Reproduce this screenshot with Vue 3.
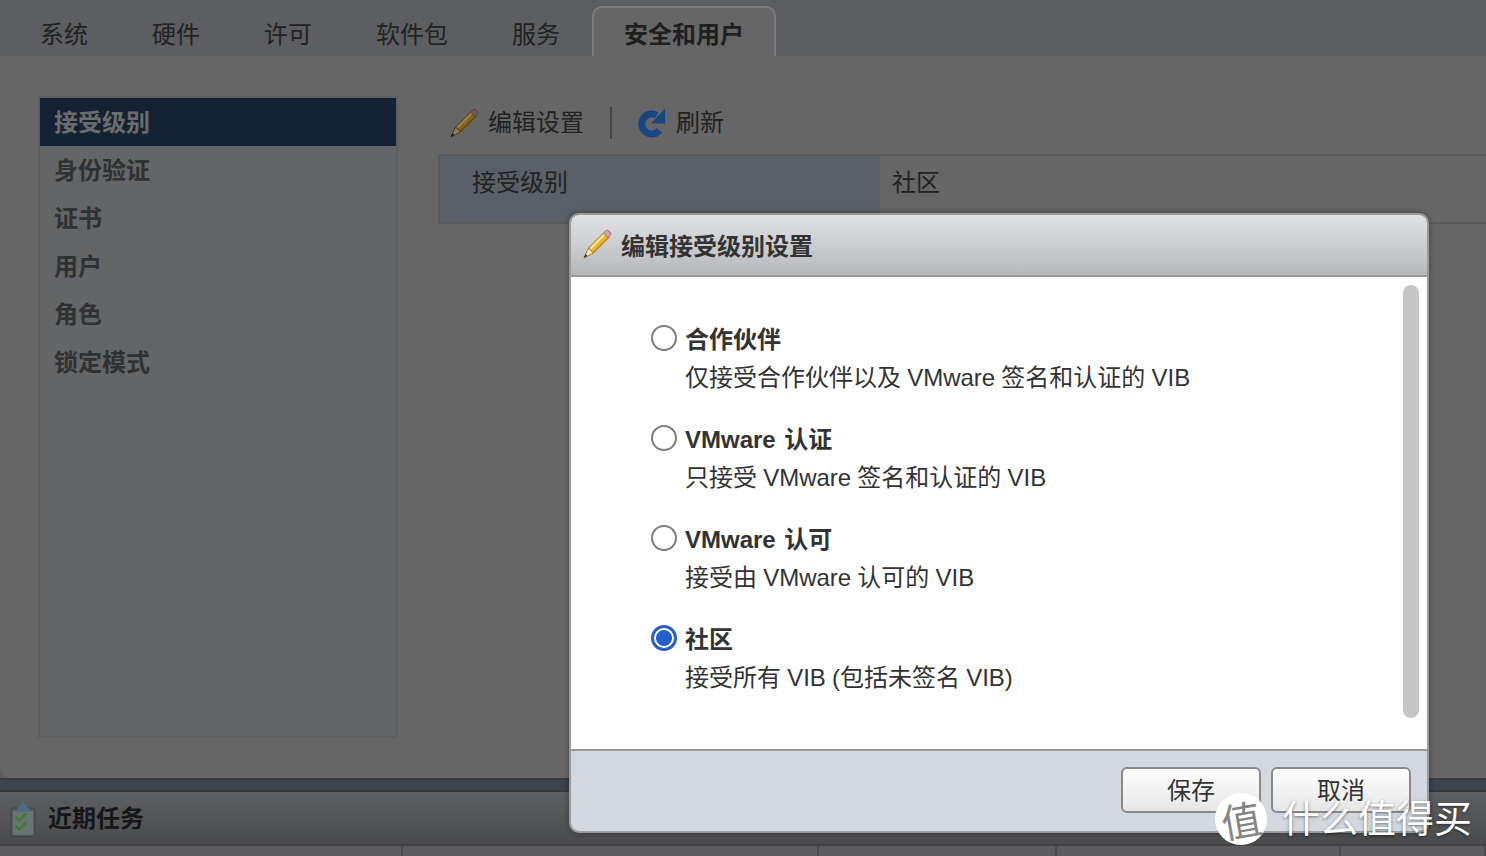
<script setup>
const tabs = [
  { label: '系统' },
  { label: '硬件' },
  { label: '许可' },
  { label: '软件包' },
  { label: '服务' },
  { label: '安全和用户', active: true },
]

const sideItems = ['接受级别', '身份验证', '证书', '用户', '角色', '锁定模式']

const options = [
  { title: '合作伙伴', desc: '仅接受合作伙伴以及 VMware 签名和认证的 VIB' },
  { title: 'VMware 认证', desc: '只接受 VMware 签名和认证的 VIB' },
  { title: 'VMware 认可', desc: '接受由 VMware 认可的 VIB' },
  { title: '社区', desc: '接受所有 VIB (包括未签名 VIB)', checked: true },
]

const taskCols = [403, 416, 238, 284, 145]
</script>

<template>
  <div class="page">
    <div class="tabs">
      <div v-for="tab in tabs" :key="tab.label" class="tab" :class="{ 'tab--active': tab.active }">{{ tab.label }}</div>
    </div>

    <div class="content">
      <div class="side">
        <div v-for="(item, i) in sideItems" :key="item" class="side__item" :class="{ 'side__item--active': i === 0 }">{{ item }}</div>
      </div>
      <div class="main">
        <div class="toolbar">
          <svg class="icon-pencil icon-pencil--dim" viewBox="0 0 30 30">
            <path d="M6.500 19 21.500 4l5 5-15 15z" fill="#e8b030" stroke="#8a6414" />
            <path d="M7.500 19 22 4.500l1.500 1.500L9 20.500z" fill="#f6e08a" />
            <path d="M10.500 23 25 8.500l1.500.5-15 15z" fill="#b9851e" />
            <path d="M21.500 4l2-2a2.500 2.500 0 0 1 3.500 0l1 1a2.500 2.500 0 0 1 0 3.500l-1.500 2.500z" fill="#c99a9c" stroke="#8d6a6c" />
            <path d="M6.500 19l5 5-9.500 5z" fill="#ecdcb8" stroke="#8a6414" />
            <path d="M3.500 25l2 2-4 2z" fill="#333" />
          </svg>
          <span class="toolbar__text">编辑设置</span>
          <span class="toolbar__sep"></span>
          <svg class="icon-refresh" viewBox="0 0 30 30">
            <path d="M19.700 7.300A10 10 0 1 0 22.400 22.400" fill="none" stroke="#1a4585" stroke-width="7" />
            <path d="M14 15.500H28V.5z" fill="#1a4585" />
          </svg>
          <span class="toolbar__text">刷新</span>
        </div>
        <div class="prop">
          <div class="prop__key">接受级别</div>
          <div class="prop__val">社区</div>
        </div>
      </div>
    </div>

    <div class="splitter"></div>

    <div class="tasks">
      <svg class="icon-tasks" viewBox="0 0 26 36">
        <rect x="1" y="7" width="24" height="28.500" rx="2" fill="#555c60" stroke="#3f4346" />
        <rect x="3" y="10" width="20" height="23.500" fill="#6b7377" />
        <path d="M7 8l6-7 6 7v3H7z" fill="#4f6c86" />
        <path d="M5.500 16l3.500 3.500 7-7M5.500 25l3.500 3.500 7-7" fill="none" stroke="#3f7d2e" stroke-width="3" />
      </svg>
      <span class="tasks__title">近期任务</span>
    </div>
    <div class="task-cols">
      <div v-for="(w, i) in taskCols" :key="i" class="task-cols__cell" :style="{ width: w + 'px' }"></div>
    </div>

    <div class="modal">
      <div class="modal__head">
        <svg class="icon-pencil" viewBox="0 0 30 30">
          <path d="M6.500 19 21.500 4l5 5-15 15z" fill="#eeb735" stroke="#a87c1c" />
          <path d="M7.500 19 22 4.500l1.500 1.500L9 20.500z" fill="#fbe996" />
          <path d="M10.500 23 25 8.500l1.500.5-15 15z" fill="#c8922a" />
          <path d="M21.500 4l2-2a2.500 2.500 0 0 1 3.500 0l1 1a2.500 2.500 0 0 1 0 3.500l-1.500 2.500z" fill="#d8a4a8" stroke="#a07478" />
          <path d="M6.500 19l5 5-9.500 5z" fill="#f3e3bd" stroke="#a87c1c" />
          <path d="M3.500 25l2 2-4 2z" fill="#333" />
        </svg>
        <span class="modal__title">编辑接受级别设置</span>
      </div>
      <div class="modal__body">
        <div class="options">
          <div v-for="opt in options" :key="opt.title" class="option">
            <span class="radio" :class="{ 'radio--on': opt.checked }"></span>
            <div class="option__text">
              <div class="option__title">{{ opt.title }}</div>
              <div class="option__desc">{{ opt.desc }}</div>
            </div>
          </div>
        </div>
        <div class="scroll"></div>
      </div>
      <div class="modal__foot">
        <button class="btn">保存</button>
        <button class="btn">取消</button>
      </div>
    </div>

    <div class="mark">
      <span class="mark__badge"><span class="mark__glyph">值</span></span>
      <span class="mark__text">什么值得买</span>
    </div>
  </div>
</template>

<style>
html, body {
  margin: 0;
  background: #5c5e61;
}
</style>

<style scoped>
.page {
  position: relative;
  width: 1486px;
  height: 856px;
  overflow: hidden;
  display: flex;
  flex-direction: column;
  background: #5c5e61;
  color: #2b2b2b;
  font-family: "Liberation Sans", "Noto Sans CJK SC", sans-serif;
  font-size: 24px;
}

.tabs {
  height: 56px;
  flex: none;
  display: flex;
  align-items: flex-end;
  padding-left: 8px;
  box-sizing: border-box;
  background: #5c5e61;
}

.tab {
  height: 50px;
  box-sizing: border-box;
  padding: 0 32px;
  line-height: 58px;
  color: #222;
}

.tab--active {
  padding: 0 30px;
  border: 2px solid #7a7c7e;
  border-bottom: 0;
  border-radius: 10px 10px 0 0;
  background: #666;
  font-weight: 700;
  line-height: 54px;
  color: #1f1f1f;
}

.content {
  height: 722px;
  flex: none;
  box-sizing: border-box;
  display: flex;
  padding: 40px 0 40px 38px;
  background: #666;
  border-radius: 0 0 0 10px;
}

.side {
  width: 360px;
  flex: none;
  box-sizing: border-box;
  border: 2px solid #5c5e60;
  background: #636567;
}

.side__item {
  height: 48px;
  padding-left: 14px;
  line-height: 50px;
  font-weight: 700;
  color: #303132;
}

.side__item--active {
  background: #152233;
  color: #6c6c6c;
}

.main {
  flex: 1;
  margin-left: 40px;
}

.toolbar {
  height: 58px;
  box-sizing: border-box;
  display: flex;
  align-items: center;
  padding: 0 0 4px 11px;
  color: #222;
}

.toolbar__text {
  margin-bottom: 6px;
}

.toolbar__sep {
  width: 2px;
  height: 32px;
  margin: 0 25px 0 26px;
  background: #454648;
}

.icon-pencil {
  width: 30px;
  height: 30px;
  margin-right: 9px;
  flex: none;
}

.icon-pencil--dim {
  filter: brightness(0.58);
}

.icon-refresh {
  width: 30px;
  height: 30px;
  margin-right: 9px;
  flex: none;
}

.prop {
  height: 70px;
  box-sizing: border-box;
  display: flex;
  border: 2px solid #585a5c;
  border-right: 0;
}

.prop__key {
  width: 440px;
  flex: none;
  box-sizing: border-box;
  padding: 7px 0 0 32px;
  background: #5a6065;
  color: #222;
}

.prop__val {
  padding: 7px 0 0 12px;
  color: #222;
}

.splitter {
  height: 14px;
  flex: none;
  box-sizing: border-box;
  background: #3e444c;
  border-top: 2px solid #37393c;
  border-bottom: 2px solid #37393c;
}

.tasks {
  height: 54px;
  flex: none;
  box-sizing: border-box;
  display: flex;
  align-items: center;
  padding: 0 0 4px 10px;
  background: linear-gradient(#5d5f62, #4a4b4d);
  border-radius: 10px 0 0 0;
  border-bottom: 2px solid #424345;
}

.icon-tasks {
  width: 26px;
  height: 36px;
  margin: 6px 12px 0 0;
  flex: none;
}

.tasks__title {
  font-weight: 700;
  color: #161616;
}

.task-cols {
  flex: 1;
  display: flex;
  background: #5d5d5f;
}

.task-cols__cell {
  flex: none;
  box-sizing: border-box;
  border-right: 2px solid #4c4c4e;
}

.modal {
  position: absolute;
  left: 569px;
  top: 213px;
  width: 860px;
  height: 620px;
  box-sizing: border-box;
  display: flex;
  flex-direction: column;
  border: 2px solid #9a9a9a;
  border-radius: 10px;
  overflow: hidden;
  box-shadow: 0 0 6px rgba(0, 0, 0, 0.35);
}

.modal__head {
  height: 62px;
  flex: none;
  box-sizing: border-box;
  display: flex;
  align-items: center;
  padding: 0 0 2px 11px;
  background: linear-gradient(#e1e2e6, #b6b8bb);
  border-bottom: 2px solid #9a9a9a;
}

.modal__title {
  font-weight: 700;
  color: #333;
}

.modal__body {
  height: 472px;
  flex: none;
  box-sizing: border-box;
  display: flex;
  justify-content: space-between;
  padding: 8px 8px 31px 80px;
  background: #fff;
}

.options {
  padding-top: 36px;
}

.option {
  height: 100px;
  display: flex;
  gap: 8px;
}

.radio {
  width: 26px;
  height: 26px;
  flex: none;
  margin-top: 4px;
  box-sizing: border-box;
  border: 2px solid #7d7d7d;
  border-radius: 50%;
  background: #fff;
}

.radio--on {
  border: 3px solid #2a62c8;
  background: radial-gradient(circle, #2460c8 0 7.500px, #fff 8.500px);
}

.option__title {
  height: 38px;
  line-height: 38px;
  font-weight: 700;
  word-spacing: 2px;
  color: #333;
}

.option__desc {
  line-height: 38px;
  word-spacing: -0.500px;
  color: #333;
}

.scroll {
  width: 16px;
  flex: none;
  background: #c6c6c6;
  border-radius: 8px;
}

.modal__foot {
  flex: 1;
  display: flex;
  justify-content: flex-end;
  gap: 10px;
  padding: 16px 16px 0 0;
  background: #d3d8e0;
  border-top: 2px solid #9a9a9a;
}

.btn {
  width: 140px;
  height: 46px;
  box-sizing: border-box;
  padding: 0 0 4px;
  border: 2px solid #8a8a8a;
  border-radius: 6px;
  background: linear-gradient(#fff, #e6e6e6);
  font: inherit;
  color: #333;
}

.mark {
  position: absolute;
  left: 1215px;
  top: 792px;
  display: flex;
  align-items: center;
  gap: 15px;
}

.mark__badge {
  width: 52px;
  height: 52px;
  display: flex;
  align-items: center;
  justify-content: center;
  border-radius: 50%;
  background: #fff;
  font-size: 40px;
  color: #858585;
}

.mark__glyph {
  transform: rotate(-10deg);
}

.mark__text {
  font-size: 38px;
  line-height: 54px;
  color: #fff;
  text-shadow: 0 1px 3px rgba(0, 0, 0, 0.5);
}
</style>
